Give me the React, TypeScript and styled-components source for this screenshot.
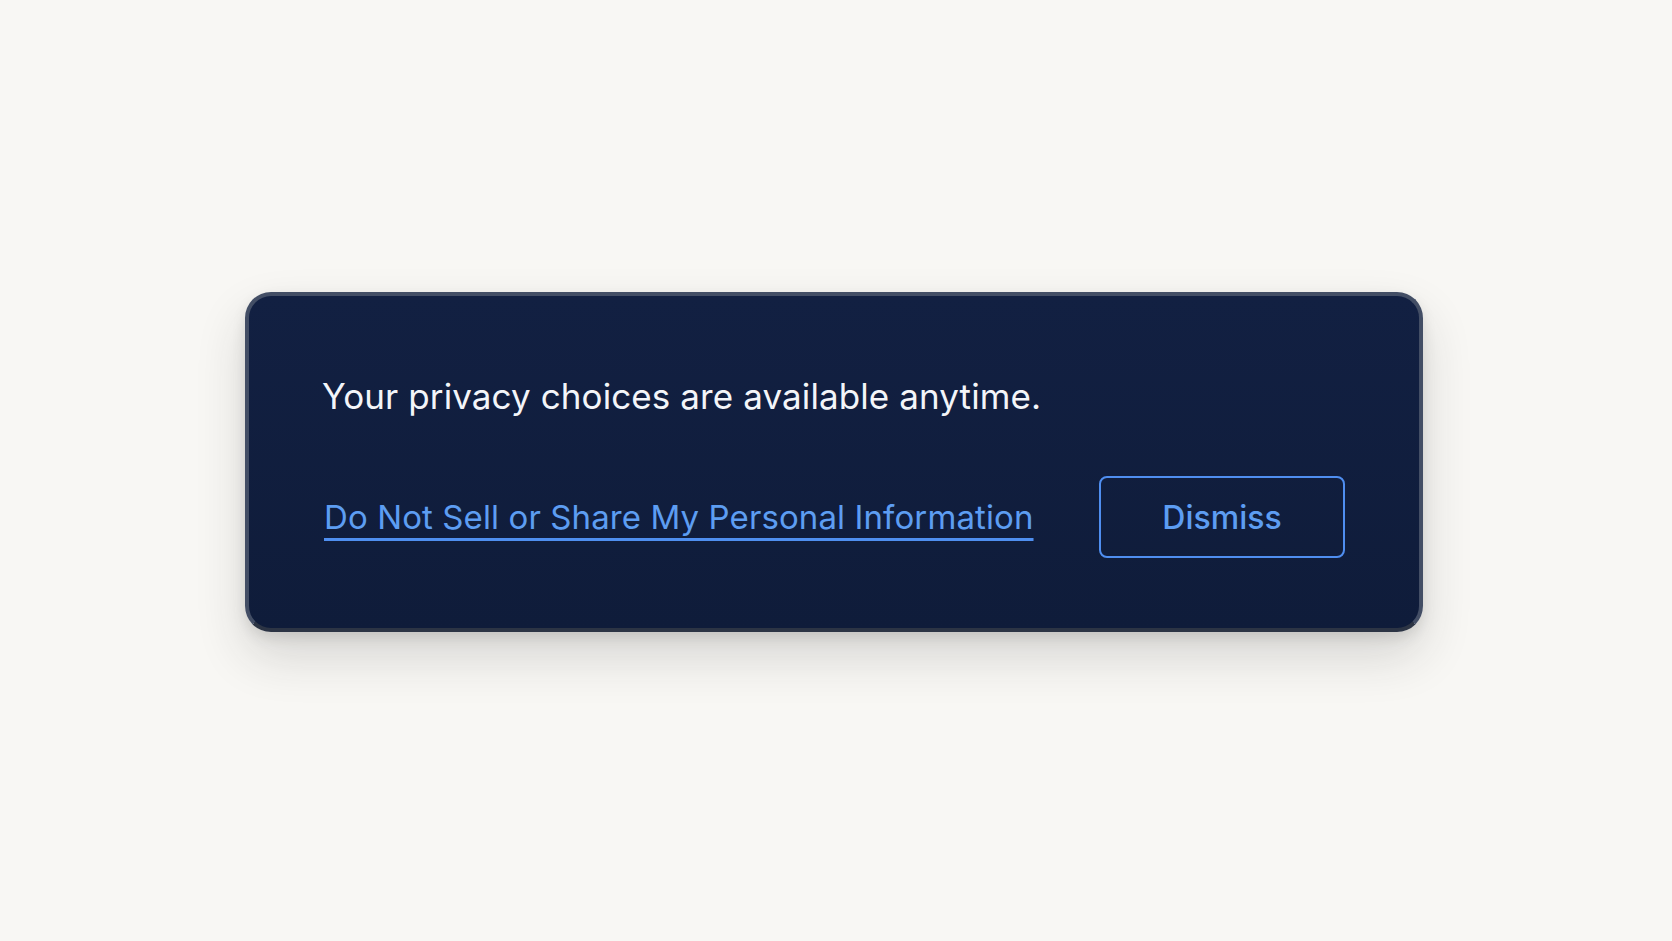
import React from 'react'
import styled, { createGlobalStyle } from 'styled-components'

const GlobalStyle = createGlobalStyle`
  html, body {
    margin: 0;
    padding: 0;
    background: #f8f7f4;
    font-family: Inter, "Noto Sans", sans-serif;
  }
`

const Page = styled.div`
  display: flex;
  justify-content: flex-start;
  padding: 292px 0 0 245px;
  height: 941px;
  box-sizing: border-box;
`

const Banner = styled.div`
  width: 1178px;
  height: 340px;
  box-sizing: border-box;
  border: 4px solid #434e65;
  border-bottom-color: #2c3444;
  border-radius: 26px;
  background: linear-gradient(180deg, #122042 0%, #0f1c3a 100%);
  box-shadow: 0 24px 50px rgba(40, 40, 40, 0.16), 0 6px 14px rgba(0, 0, 0, 0.1);
  padding: 78px 74px 0 73px;
  display: flex;
  flex-direction: column;
`

const Message = styled.p`
  margin: 0;
  color: #f3f5f9;
  font-size: 35px;
  line-height: 44px;
  font-weight: 400;
  letter-spacing: 0.1px;
`

const Actions = styled.div`
  display: flex;
  align-items: center;
  justify-content: space-between;
  margin-top: 58px;
`

const Link = styled.a`
  color: #5d9df2;
  font-size: 33px;
  line-height: 40px;
  letter-spacing: 0.1px;
  text-decoration: underline;
  text-decoration-thickness: 3px;
  text-underline-offset: 9px;
  text-decoration-color: #4f8ff0;
  cursor: pointer;
  margin-left: 2px;
`

const DismissButton = styled.button`
  width: 246px;
  height: 82px;
  box-sizing: border-box;
  border: 2px solid #4f8ef0;
  border-radius: 8px;
  background: transparent;
  color: #5d9df2;
  font-family: inherit;
  font-size: 32px;
  font-weight: 500;
  cursor: pointer;
`

const App: React.FC = () => {
  return (
    <>
      <GlobalStyle />
      <Page>
        <Banner>
          <Message>Your privacy choices are available anytime.</Message>
          <Actions>
            <Link>Do Not Sell or Share My Personal Information</Link>
            <DismissButton>Dismiss</DismissButton>
          </Actions>
        </Banner>
      </Page>
    </>
  )
}

export default App
